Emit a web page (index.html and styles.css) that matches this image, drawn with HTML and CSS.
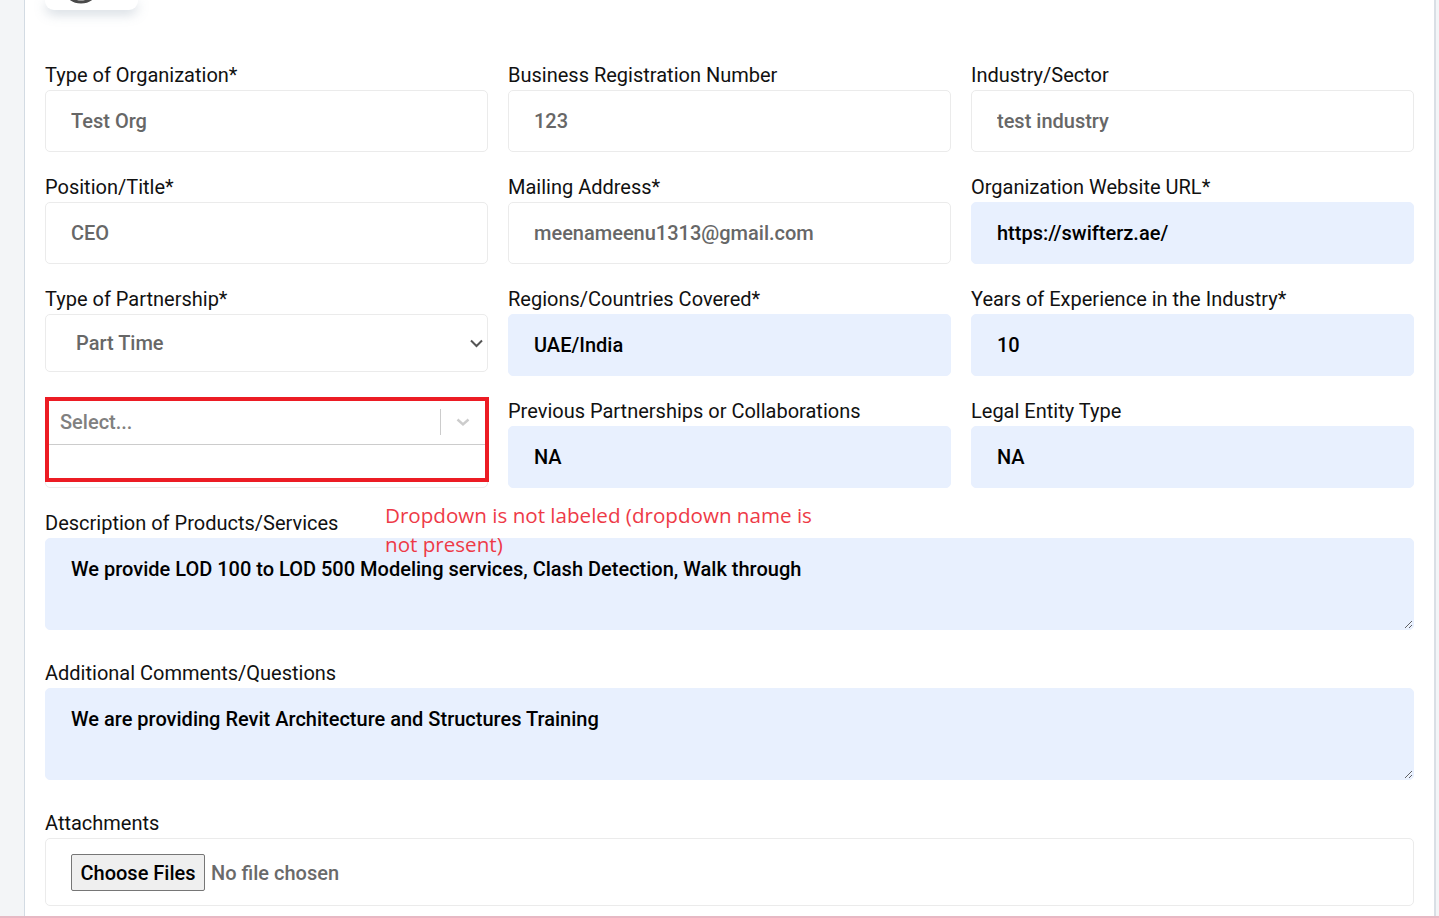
FILE: index.html
```html
<!DOCTYPE html>
<html>
<head>
<meta charset="utf-8">
<link rel="stylesheet" href="styles.css">
</head>
<body>
<div class="page">
  <div class="panel">
    <div class="logo-card">
      <svg width="93" height="10" viewBox="0 0 93 10"><circle cx="36" cy="-16" r="18" fill="#e6e6e6" stroke="#4a4a4a" stroke-width="3"/></svg>
    </div>
    <form class="form">
      <div class="field">
        <label class="lbl">Type of Organization*</label>
        <input class="inp" type="text" value="Test Org" readonly>
      </div>
      <div class="field">
        <label class="lbl">Business Registration Number</label>
        <input class="inp" type="text" value="123" readonly>
      </div>
      <div class="field">
        <label class="lbl">Industry/Sector</label>
        <input class="inp" type="text" value="test industry" readonly>
      </div>

      <div class="field">
        <label class="lbl">Position/Title*</label>
        <input class="inp" type="text" value="CEO" readonly>
      </div>
      <div class="field">
        <label class="lbl">Mailing Address*</label>
        <input class="inp" type="text" value="meenameenu1313@gmail.com" readonly>
      </div>
      <div class="field">
        <label class="lbl">Organization Website URL*</label>
        <input class="inp filled" type="text" value="https://swifterz.ae/">
      </div>

      <div class="field">
        <label class="lbl">Type of Partnership*</label>
        <div class="sel-wrap">
          <select class="sel"><option>Part Time</option></select>
          <svg class="sel-chev" width="13" height="9" viewBox="0 0 13 9"><path d="M1 1.5 L6.5 7 L12 1.5" fill="none" stroke="#555555" stroke-width="2"/></svg>
        </div>
      </div>
      <div class="field">
        <label class="lbl">Regions/Countries Covered*</label>
        <input class="inp filled" type="text" value="UAE/India">
      </div>
      <div class="field">
        <label class="lbl">Years of Experience in the Industry*</label>
        <input class="inp filled" type="text" value="10">
      </div>

      <div class="field">
        <div class="rs-wrap">
          <div class="rs-control">
            <span class="rs-placeholder">Select...</span>
            <span class="rs-indicators">
              <span class="rs-sep"></span>
              <svg class="rs-chev" width="20" height="20" viewBox="0 0 20 20"><path d="M4.5 7.5 L10 12.5 L15.5 7.5" fill="none" stroke="#cccccc" stroke-width="2.4"/></svg>
            </span>
          </div>
          <div class="annot-box"></div>
        </div>
      </div>
      <div class="field">
        <label class="lbl">Previous Partnerships or Collaborations</label>
        <input class="inp filled" type="text" value="NA">
      </div>
      <div class="field">
        <label class="lbl">Legal Entity Type</label>
        <input class="inp filled" type="text" value="NA">
      </div>

      <div class="field wide tall">
        <label class="lbl">Description of Products/Services</label>
        <textarea class="ta">We provide LOD 100 to LOD 500 Modeling services, Clash Detection, Walk through</textarea>
        <div class="annot-text">Dropdown is not labeled (dropdown name is not present)</div>
      </div>
      <div class="field wide tall">
        <label class="lbl">Additional Comments/Questions</label>
        <textarea class="ta">We are providing Revit Architecture and Structures Training</textarea>
      </div>
      <div class="field wide">
        <label class="lbl">Attachments</label>
        <div class="file-box">
          <input class="file" type="file" multiple>
        </div>
      </div>
    </form>
  </div>
</div>
<div class="bottom-line"></div>
</body>
</html>
```

FILE: styles.css
```css
html, body {
  margin: 0;
  padding: 0;
}
body {
  background: #f3f5f7;
  font-family: Roboto, "Liberation Sans", sans-serif;
  overflow: hidden;
}
.page {
  padding-left: 24px;
}
.panel {
  width: 1369px;
  background: #ffffff;
  border-left: 1px solid #d3dbe3;
  border-right: 2px solid #d9dfe5;
  padding: 0 20px;
  height: 916px;
}
.logo-card {
  width: 93px;
  height: 10px;
  background: #ffffff;
  border-radius: 0 0 9px 9px;
  box-shadow: 0 4px 12px rgba(120, 140, 160, 0.35);
  overflow: hidden;
}
.logo-card svg {
  display: block;
}
.form {
  display: grid;
  grid-template-columns: repeat(3, 443px);
  column-gap: 20px;
  margin-top: 53px;
}
.field {
  display: flex;
  flex-direction: column;
  margin-bottom: 23px;
  position: relative;
}
.field.wide {
  grid-column: 1 / -1;
}
.field.tall {
  margin-bottom: 31px;
}
.lbl {
  font-size: 20px;
  line-height: 24px;
  color: #111111;
  margin-bottom: 3px;
}
.inp {
  box-sizing: border-box;
  height: 62px;
  border: 1px solid #ebebeb;
  border-radius: 5px;
  padding: 0 25px;
  font-family: Roboto, "Liberation Sans", sans-serif;
  font-size: 20px;
  font-weight: 500;
  color: #676767;
  background: #ffffff;
  outline: none;
}
.inp.filled {
  background: #e8f0fe;
  border-color: #e8f0fe;
  color: #000000;
}
.sel-wrap {
  position: relative;
  display: flex;
  flex-direction: column;
}
.sel {
  -webkit-appearance: none;
  appearance: none;
  box-sizing: border-box;
  height: 58px;
  border: 1px solid #ebebeb;
  border-radius: 5px;
  padding: 0 30px 0 30px;
  font-family: Roboto, "Liberation Sans", sans-serif;
  font-size: 20px;
  font-weight: 500;
  color: #676767;
  background: #ffffff;
  outline: none;
}
.sel-chev {
  position: absolute;
  right: 5px;
  top: 25px;
  pointer-events: none;
}
.rs-wrap {
  position: relative;
  box-sizing: border-box;
  height: 89px;
  border: 1px solid #ececec;
  border-radius: 5px;
}
.rs-control {
  box-sizing: border-box;
  height: 45px;
  border-bottom: 1px solid #cccccc;
  display: flex;
  align-items: center;
  justify-content: space-between;
  padding-left: 14px;
  padding-right: 14px;
}
.rs-placeholder {
  font-size: 20px;
  color: #808080;
  font-weight: 500;
}
.rs-indicators {
  display: flex;
  align-items: center;
  gap: 12px;
}
.rs-sep {
  width: 1px;
  height: 26px;
  background: #cccccc;
}
.rs-chev {
  display: block;
}
.annot-box {
  position: absolute;
  top: -3px;
  left: -1px;
  right: -2px;
  bottom: 5px;
  border: 4px solid #ec1c24;
}
.ta {
  box-sizing: border-box;
  height: 92px;
  border: 1px solid #e8f0fe;
  border-radius: 5px;
  background: #e8f0fe;
  padding: 18px 25px;
  font-family: Roboto, "Liberation Sans", sans-serif;
  font-size: 20px;
  line-height: 24px;
  font-weight: 500;
  color: #000000;
  resize: vertical;
  outline: none;
}
.annot-text {
  position: absolute;
  left: 340px;
  top: -10px;
  width: 450px;
  font-family: "Open Sans", "Noto Sans", sans-serif;
  font-size: 20.6px;
  line-height: 29px;
  color: #ee3a47;
}
.file-box {
  box-sizing: border-box;
  height: 68px;
  border: 1px solid #ebebeb;
  border-radius: 5px;
  padding: 15px 25px;
}
.file {
  font-family: Roboto, "Liberation Sans", sans-serif;
  font-size: 20px;
  font-weight: 500;
  color: #6a6a6a;
}
.file::file-selector-button {
  font-family: Roboto, "Liberation Sans", sans-serif;
  font-size: 20px;
  font-weight: 500;
  color: #000000;
  background: #efefef;
  border: 1px solid #767676;
  border-radius: 2px;
  height: 37px;
  padding: 0 8.5px;
  margin-right: 6px;
}
.bottom-line {
  height: 2px;
  background: #e8b8c4;
}
```
